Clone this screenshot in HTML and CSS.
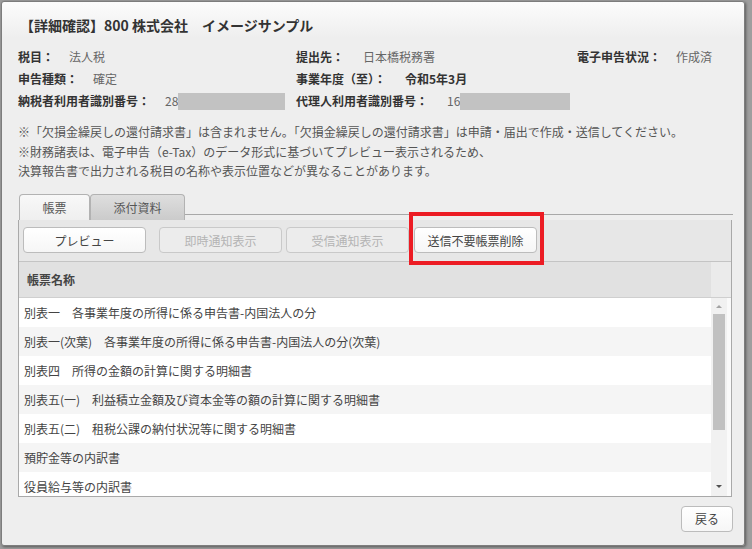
FILE: index.html
```html
<!DOCTYPE html>
<html lang="ja">
<head>
    <meta charset="UTF-8">
    <title>詳細確認</title>
    <link rel="stylesheet" href="styles.css">
</head>
<body>

    <!-- Dialog -->
    <div class="dialog">
        <h1 class="title">【詳細確認】800 株式会社　イメージサンプル</h1>

        <!-- Summary -->
        <div class="info">
            <div class="info-item"><span class="label">税目：</span><span class="value">法人税</span></div>
            <div class="info-item mid"><span class="label">提出先：</span><span class="value">日本橋税務署</span></div>
            <div class="info-item"><span class="label">電子申告状況：</span><span class="value">作成済</span></div>

            <div class="info-item"><span class="label">申告種類：</span><span class="value">確定</span></div>
            <div class="info-item mid"><span class="label">事業年度（至）：</span><span class="value strong">令和5年3月</span></div>
            <div class="info-item"></div>

            <div class="info-item"><span class="label">納税者利用者識別番号：</span><span class="value">28</span><span class="masked masked-a"></span></div>
            <div class="info-item mid"><span class="label">代理人利用者識別番号：</span><span class="value">16</span><span class="masked masked-b"></span></div>
            <div class="info-item"></div>
        </div>

        <div class="notes">
            <p>※「欠損金繰戻しの還付請求書」は含まれません。「欠損金繰戻しの還付請求書」は申請・届出で作成・送信してください。</p>
            <p>※財務諸表は、電子申告（e-Tax）のデータ形式に基づいてプレビュー表示されるため、</p>
            <p>決算報告書で出力される税目の名称や表示位置などが異なることがあります。</p>
        </div>

        <!-- Tabs -->
        <div class="tabs">
            <div class="tab active">帳票</div>
            <div class="tab">添付資料</div>
            <div class="tab-fill"></div>
        </div>

        <div class="panel">
            <div class="toolbar">
                <button class="btn btn-preview">プレビュー</button>
                <button class="btn btn-first" disabled>即時通知表示</button>
                <button class="btn" disabled>受信通知表示</button>
                <span class="marked">
                    <button class="btn">送信不要帳票削除</button>
                </span>
            </div>

            <div class="head">
                <div class="head-cell">帳票名称</div>
                <div class="head-gap"></div>
            </div>

            <div class="body">
                <ul class="rows">
                    <li>別表一　各事業年度の所得に係る申告書-内国法人の分</li>
                    <li>別表一(次葉)　各事業年度の所得に係る申告書-内国法人の分(次葉)</li>
                    <li>別表四　所得の金額の計算に関する明細書</li>
                    <li>別表五(一)　利益積立金額及び資本金等の額の計算に関する明細書</li>
                    <li>別表五(二)　租税公課の納付状況等に関する明細書</li>
                    <li>預貯金等の内訳書</li>
                    <li>役員給与等の内訳書</li>
                </ul>
                <div class="vscroll">
                    <span class="arrow-up"></span>
                    <span class="thumb"></span>
                    <span class="arrow-down"></span>
                </div>
            </div>
        </div>

        <div class="footer">
            <button class="btn btn-back">戻る</button>
        </div>
    </div>

</body>
</html>
```

FILE: styles.css
```css
/* General Reset */
body, h1, p, ul, li, button {
    margin: 0;
    padding: 0;
    font-family: "Noto Sans CJK JP", "Noto Sans", sans-serif;
}
body {
    background-color: #9e9e9e;
    width: 752px;
    height: 549px;
    overflow: hidden;
}
.dialog {
    box-sizing: border-box;
    margin: 1px 0 0 1px;
    width: 744px;
    height: 545px;
    padding: 13px 11px 0 16px;
    background: linear-gradient(#fcfcfc, #eeeeee 36px);
    border: 1px solid #7d7d7d;
    border-radius: 3px;
    box-shadow: 1px 1px 3px rgba(0, 0, 0, 0.45);
}
.title {
    font-size: 14px;
    line-height: 20px;
    font-weight: bold;
    color: #333;
    padding-left: 2px;
}

/* Summary */
.info {
    display: grid;
    grid-template-columns: 278px 281px auto;
    margin-top: 11px;
    font-size: 12px;
    line-height: 22px;
}
.info-item {
    display: flex;
    align-items: center;
    height: 22px;
}
.label {
    font-weight: bold;
    color: #333;
    margin-right: 15px;
}
.mid .label {
    margin-right: 19px;
}
.value {
    color: #666;
}
.value.strong {
    font-weight: bold;
    color: #333;
}
.masked {
    display: inline-block;
    height: 17px;
    background-color: #c2c2c2;
}
.masked-a {
    width: 107px;
}
.masked-b {
    width: 110px;
}

.notes {
    margin-top: 10px;
    font-size: 12px;
    line-height: 19.5px;
    color: #555;
}

/* Tabs */
.tabs {
    display: flex;
    margin-top: 13px;
    height: 26px;
}
.tab {
    box-sizing: border-box;
    height: 26px;
    padding-top: 3px;
    font-size: 12px;
    line-height: 20px;
    text-align: center;
    color: #555;
    border: 1px solid #b2b2b2;
    border-bottom: none;
    border-radius: 4px 4px 0 0;
    background: linear-gradient(#dedede, #cbcbcb);
}
.tab.active {
    width: 71px;
    margin-left: 1px;
    background: linear-gradient(#f8f8f8, #efefef);
}
.tab + .tab {
    width: 95px;
}
.tab-fill {
    flex: 1;
    height: 20px;
    border-bottom: 1px solid #a8a8a8;
}

.panel {
    width: 714px;
    box-sizing: border-box;
    border: 1px solid #a9a9a9;
    border-top: none;
    background-color: #fff;
}
.toolbar {
    display: flex;
    align-items: center;
    height: 41px;
    padding-left: 4px;
    background-color: #e7e7e7;
    border-bottom: 1px solid #c4c4c4;
}
.btn {
    box-sizing: border-box;
    width: 123px;
    height: 26px;
    font-size: 12px;
    color: #444;
    background: linear-gradient(#ffffff, #f6f6f6);
    border: 1px solid #bcbcbc;
    border-radius: 4px;
    cursor: pointer;
}
.btn:disabled {
    color: #b4b4b4;
    background: #ececec;
    border-color: #c9c9c9;
    cursor: default;
}
.btn-first {
    margin-left: 13px;
}
.btn-first + .btn {
    margin-left: 4px;
}
.marked {
    position: relative;
    margin-left: 5px;
    display: flex;
}
/* red annotation frame */
.marked::after {
    content: "";
    position: absolute;
    left: -5px;
    right: -7px;
    top: -15px;
    bottom: -12px;
    border: 4px solid #ec1c24;
}

.head {
    display: flex;
    height: 35px;
    border-bottom: 1px solid #cfcfcf;
}
.head-cell {
    flex: 1;
    padding-left: 8px;
    font-size: 12px;
    line-height: 35px;
    font-weight: bold;
    color: #444;
    background-color: #e1e1e1;
}
.head-gap {
    width: 20px;
    background-color: #ebebeb;
}

.body {
    display: flex;
    height: 198px;
}
.rows {
    flex: 1;
    list-style: none;
    overflow: hidden;
}
.rows li {
    height: 29px;
    padding-left: 5px;
    font-size: 12px;
    line-height: 29px;
    color: #444;
    white-space: nowrap;
}
.rows li:nth-child(even) {
    background-color: #f5f5f5;
}
.vscroll {
    position: relative;
    width: 20px;
    background: linear-gradient(90deg, #f1f1f1 16px, #fafafa 16px);
}
.arrow-up, .arrow-down {
    position: absolute;
    left: 5px;
    width: 0;
    height: 0;
    border-left: 3px solid transparent;
    border-right: 3px solid transparent;
}
.arrow-up {
    top: 7px;
    border-bottom: 3px solid #a3a3a3;
}
.arrow-down {
    bottom: 8px;
    border-top: 3px solid #505050;
}
.thumb {
    position: absolute;
    left: 2px;
    top: 16px;
    width: 12px;
    height: 116px;
    background-color: #c1c1c1;
}

.footer {
    display: flex;
    justify-content: flex-end;
    width: 714px;
    margin-top: 9px;
}
.btn-back {
    width: 52px;
    margin-right: -1px;
}
```
